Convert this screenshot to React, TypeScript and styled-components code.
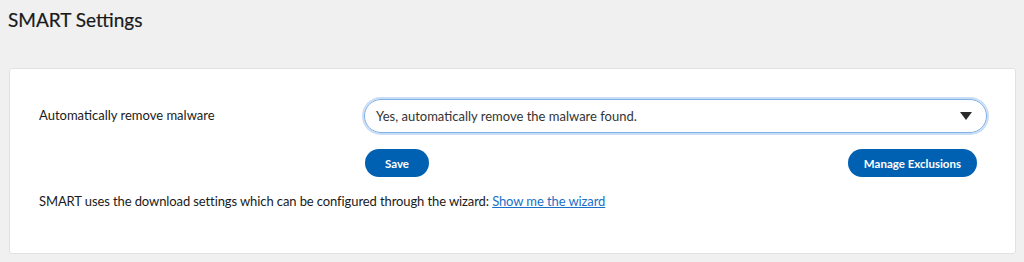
import { FC } from "react";
import styled, { createGlobalStyle } from "styled-components";

const GlobalStyle = createGlobalStyle`
  body {
    margin: 0;
    background-color: #f0f0f0;
    font-family: Lato, "Noto Sans", sans-serif;
    color: #222;
  }
`;

const App: FC = () => {
  return (
    <StyledPage>
      <GlobalStyle />
      <StyledTitle>SMART Settings</StyledTitle>
      <StyledCard>
        <StyledFormGrid>
          <StyledLabel>Automatically remove malware</StyledLabel>
          <StyledControls>
            <StyledSelect>
              <span>Yes, automatically remove the malware found.</span>
              <StyledCaret />
            </StyledSelect>
            <StyledButtonRow>
              <StyledButton>Save</StyledButton>
              <StyledButton>Manage Exclusions</StyledButton>
            </StyledButtonRow>
          </StyledControls>
        </StyledFormGrid>
        <StyledNote>
          SMART uses the download settings which can be configured through the
          wizard: <StyledLink href="#">Show me the wizard</StyledLink>
        </StyledNote>
      </StyledCard>
    </StyledPage>
  );
};

const StyledPage = styled.div`
  padding: 8px 8px 8px 9px;
`;

const StyledTitle = styled.h1`
  margin: 0 0 0 -1px;
  font-size: 19px;
  font-weight: 400;
  line-height: 24px;
  color: #1a1a1a;
  -webkit-text-stroke: 0.2px #1a1a1a;
`;

const StyledCard = styled.div`
  margin-top: 36px;
  background: #fff;
  border: 1px solid #e2e2e2;
  border-radius: 3px;
  height: 186px;
  box-sizing: border-box;
  padding: 28px 28px 0 29px;
`;

const StyledFormGrid = styled.div`
  display: grid;
  grid-template-columns: 325px 1fr;
`;

const StyledLabel = styled.div`
  font-size: 13px;
  line-height: 36px;
  color: #1a1a1a;
`;

const StyledControls = styled.div`
  display: flex;
  flex-direction: column;
`;

const StyledSelect = styled.div`
  display: flex;
  align-items: center;
  justify-content: space-between;
  height: 32px;
  margin: 2px 0;
  padding: 0 14px 0 11px;
  border: 1px solid #7fb0e6;
  box-shadow: 0 0 0 2px #c9def6;
  border-radius: 17px;
  font-size: 13px;
  color: #333;
`;

const StyledCaret = styled.span`
  width: 0;
  height: 0;
  border-left: 6px solid transparent;
  border-right: 6px solid transparent;
  border-top: 8px solid #2a2a2a;
`;

const StyledButtonRow = styled.div`
  display: flex;
  justify-content: space-between;
  margin-top: 14px;
  padding: 0 10px 0 1px;
`;

const StyledButton = styled.button`
  height: 28px;
  padding: 0 16px;
  min-width: 64px;
  border: none;
  border-radius: 14px;
  background: #0061b2;
  color: #fff;
  font-family: Lato, "Noto Sans", sans-serif;
  font-size: 11.5px;
  font-weight: 700;
`;

const StyledNote = styled.div`
  margin-top: 15px;
  font-size: 13px;
  line-height: 18px;
  color: #1a1a1a;
  letter-spacing: -0.1px;
`;

const StyledLink = styled.a`
  color: #1a6fc7;
  text-decoration: underline;
`;

export default App;
